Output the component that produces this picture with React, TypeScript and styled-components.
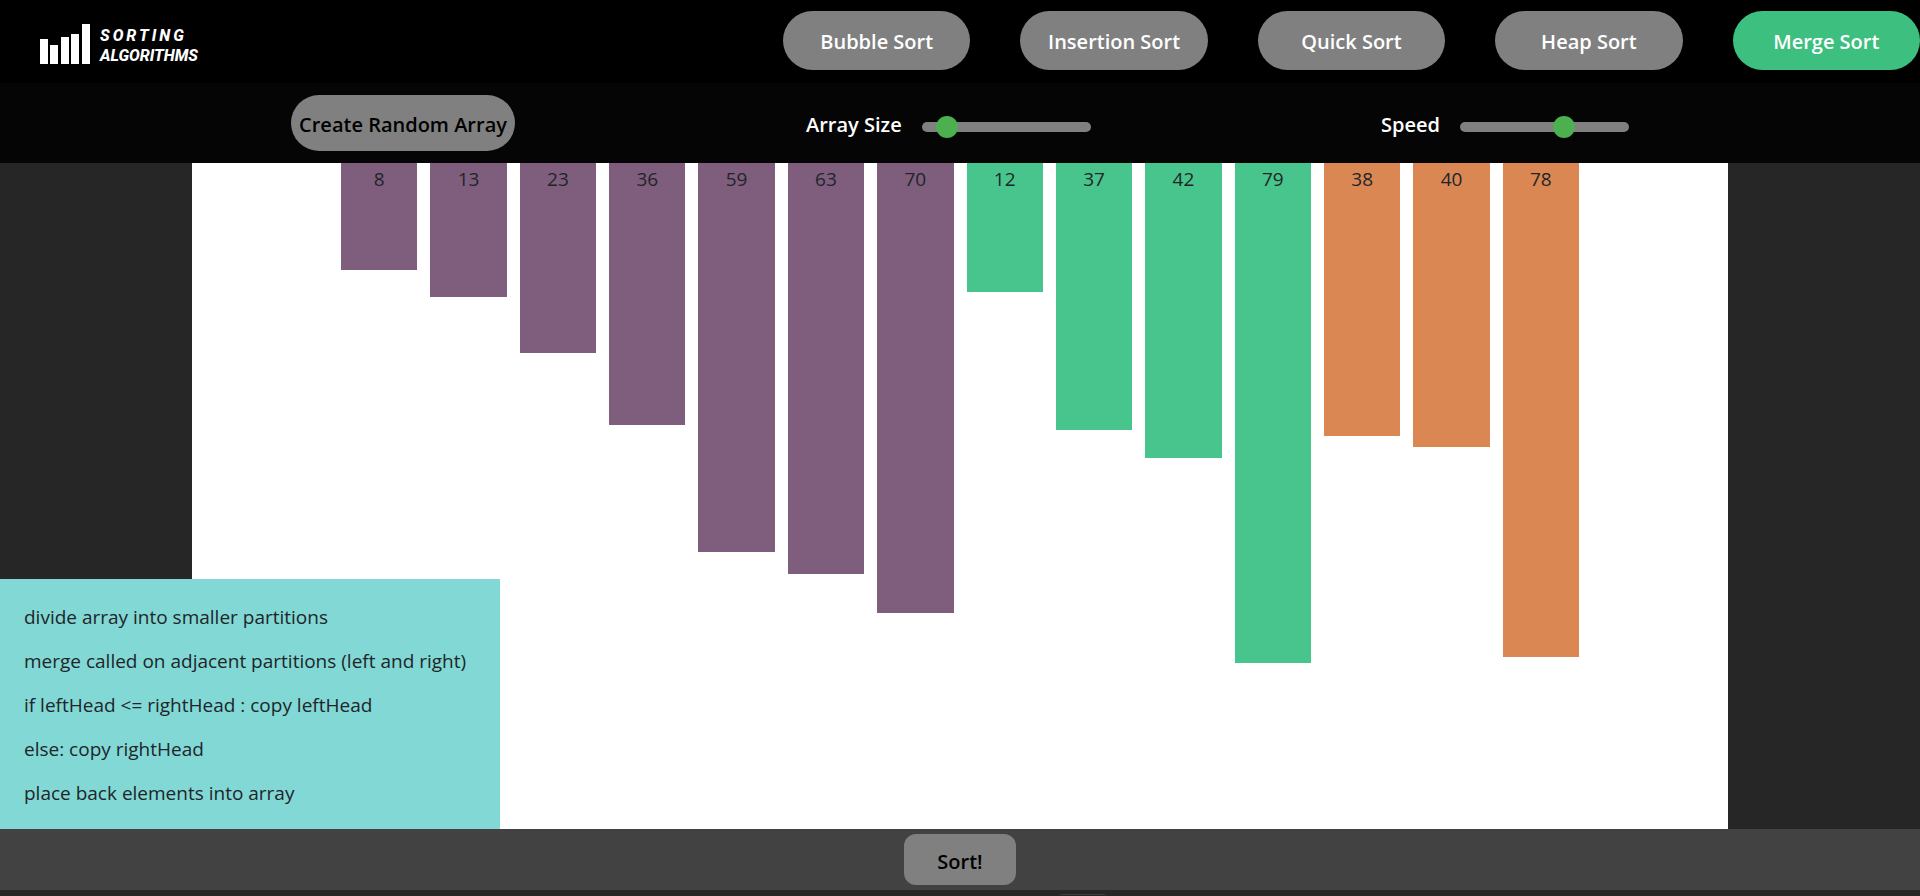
import React, { useState } from "react";
import styled, { createGlobalStyle } from "styled-components";

const GlobalStyle = createGlobalStyle`
  *, *::before, *::after { box-sizing: border-box; }
  body {
    margin: 0;
    background: #262626;
    color: #212529;
    font-family: "Segoe UI", "Open Sans", "Noto Sans", sans-serif;
    font-size: 20px;
  }
  button, input { font: inherit; }
`;

const Page = styled.div`
  min-height: 100vh;
  display: flex;
  flex-direction: column;
`;

const Header = styled.header`
  height: 83px;
  display: flex;
  align-items: center;
  justify-content: space-between;
  padding: 0 0 2px 40px;
  background: #000;
`;

const Brand = styled.a`
  display: flex;
  align-items: center;
  gap: 10px;
  padding-top: 6px;
  color: #fff;
  text-decoration: none;
`;

const BrandName = styled.span`
  display: flex;
  flex-direction: column;
  padding-top: 4px;
  font: italic 800 16px/20px Roboto, "Liberation Sans", sans-serif;
`;

const BrandWide = styled.span`
  letter-spacing: 3px;
`;

const Nav = styled.nav`
  width: 1137px;
  max-width: 75%;
  display: grid;
  grid-template-columns: repeat(5, 1fr);
  gap: 50px;
`;

const NavButton = styled.button<{ $active: boolean }>`
  height: 59px;
  padding: 2px 0 0;
  border: 0;
  border-radius: 30px;
  background: ${(p) => (p.$active ? "#3dc07f" : "#808080")};
  color: #fff;
  font-weight: 600;
`;

const Controls = styled.section`
  height: 80px;
  display: grid;
  grid-template-columns: 806px 1fr 539px;
  align-items: center;
  background: #050505;
`;

const RandomButton = styled.button`
  justify-self: center;
  height: 56px;
  padding: 2px 8px 0;
  border: 0;
  border-radius: 28px;
  background: #808080;
  color: #000;
  font-weight: 600;
`;

const SliderField = styled.div`
  display: flex;
  align-items: center;
  gap: 20px;
  padding-top: 2px;
  color: #fff;
  font-weight: 600;
`;

const Slider = styled.input`
  appearance: none;
  width: 169px;
  height: 10px;
  margin: 6px 0 0;
  border-radius: 5px;
  background: #808080;

  &::-webkit-slider-thumb {
    appearance: none;
    width: 22px;
    height: 22px;
    border-radius: 50%;
    background: #4caf50;
  }
`;

const Stage = styled.main`
  position: relative;
  flex: 1;
  display: flex;
  justify-content: center;
  font-size: 19px;
`;

const Chart = styled.ul`
  width: 80%;
  margin: 0;
  padding: 0 149px;
  display: flex;
  align-items: flex-start;
  gap: 13px;
  background: #fff;
  list-style: none;
`;

const Bar = styled.li<{ $color: string }>`
  flex: 1;
  min-height: 32px;
  background: ${(p) => p.$color};
  line-height: 32px;
  text-align: center;
`;

const Steps = styled.aside`
  position: absolute;
  left: 0;
  bottom: 0;
  width: 500px;
  height: 250px;
  padding: 16px 24px;
  background: #81d8d5;
`;

const Step = styled.p`
  margin: 0;
  line-height: 44px;
`;

const Footer = styled.footer`
  display: flex;
  justify-content: center;
  padding: 5px;
  background: #424242;
`;

const SortButton = styled.button`
  width: 112px;
  height: 51px;
  padding: 4px 0 0;
  border: 0;
  border-radius: 12px;
  background: #808080;
  color: #000;
  font-weight: 600;
`;

const BottomEdge = styled.div`
  height: 6px;
  padding: 4px 0 0 1060px;
  background: #272624;
`;

const EdgeTab = styled.div`
  width: 46px;
  height: 2px;
  border-top: 1px solid #403f3e;
  border-radius: 4px 4px 0 0;
`;

const PURPLE = "#7f5d7c";
const GREEN = "#48c58c";
const ORANGE = "#da8753";

const groups = [
  { color: PURPLE, values: [8, 13, 23, 36, 59, 63, 70] },
  { color: GREEN, values: [12, 37, 42, 79] },
  { color: ORANGE, values: [38, 40, 78] },
];

const algorithms = ["Bubble Sort", "Insertion Sort", "Quick Sort", "Heap Sort", "Merge Sort"];

const steps = [
  "divide array into smaller partitions",
  "merge called on adjacent partitions (left and right)",
  "if leftHead <= rightHead : copy leftHead",
  "else: copy rightHead",
  "place back elements into array",
];

const barHeight = (value: number) => Math.floor(62.8 + value * 5.54);

export default function App() {
  const [selected, setSelected] = useState("Merge Sort");
  const [size, setSize] = useState(14);
  const [speed, setSpeed] = useState(63);

  return (
    <Page>
      <GlobalStyle />
      <Header>
        <Brand href="#">
          <svg width="50" height="40" viewBox="0 0 50 40" fill="#fff" aria-hidden="true">
            <rect x="0" y="15" width="8" height="25" />
            <rect x="10" y="21" width="8" height="19" />
            <rect x="21" y="13" width="8" height="27" />
            <rect x="31" y="10" width="8" height="30" />
            <rect x="42" y="0" width="8" height="40" />
          </svg>
          <BrandName>
            <BrandWide>SORTING</BrandWide>
            <span>ALGORITHMS</span>
          </BrandName>
        </Brand>
        <Nav>
          {algorithms.map((name) => (
            <NavButton key={name} $active={name === selected} onClick={() => setSelected(name)}>
              {name}
            </NavButton>
          ))}
        </Nav>
      </Header>
      <Controls>
        <RandomButton>Create Random Array</RandomButton>
        <SliderField>
          <label htmlFor="size">Array Size</label>
          <Slider id="size" type="range" min={5} max={100} value={size} onChange={(e) => setSize(Number(e.target.value))} />
        </SliderField>
        <SliderField>
          <label htmlFor="speed">Speed</label>
          <Slider id="speed" type="range" min={0} max={100} value={speed} onChange={(e) => setSpeed(Number(e.target.value))} />
        </SliderField>
      </Controls>
      <Stage>
        <Chart>
          {groups.flatMap((group) =>
            group.values.map((value) => (
              <Bar key={value} $color={group.color} style={{ height: barHeight(value) }}>
                {value}
              </Bar>
            ))
          )}
        </Chart>
        <Steps>
          {steps.map((text) => (
            <Step key={text}>{text}</Step>
          ))}
        </Steps>
      </Stage>
      <Footer>
        <SortButton>Sort!</SortButton>
      </Footer>
      <BottomEdge>
        <EdgeTab />
      </BottomEdge>
    </Page>
  );
}
